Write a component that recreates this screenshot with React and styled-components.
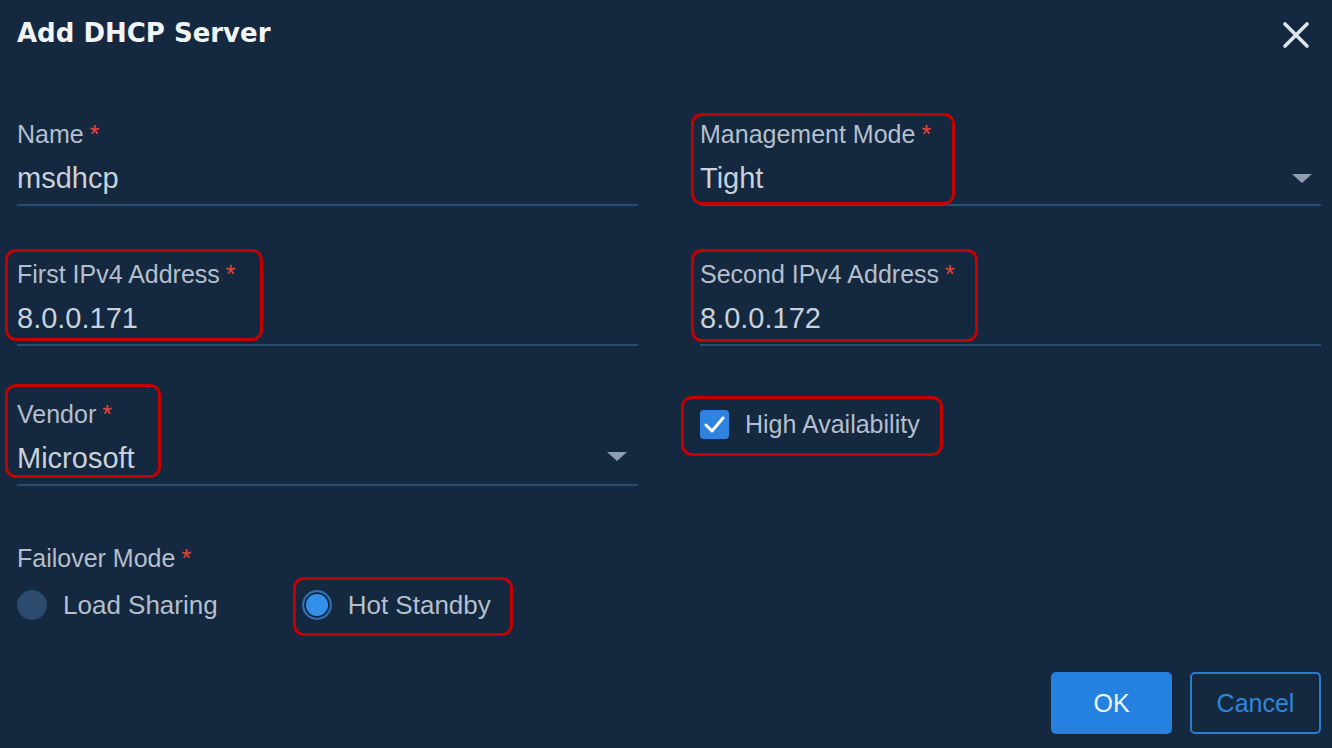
import React from 'react'
import styled, { createGlobalStyle } from 'styled-components'

const GlobalStyle = createGlobalStyle`
  html, body {
    margin: 0;
    padding: 0;
    background: #142840;
  }
  body {
    font-family: "Liberation Sans", Arial, sans-serif;
  }
`

const Dialog = styled.div`
  width: 1332px;
  height: 748px;
  box-sizing: border-box;
  padding: 16px 11px 0 17px;
  display: flex;
  flex-direction: column;
  background: #142840;
  overflow: hidden;
`

const Header = styled.div`
  display: flex;
  justify-content: space-between;
  align-items: flex-start;
  height: 32px;
`

const Title = styled.h1`
  margin: 2px 0 0;
  font-family: "DejaVu Sans", sans-serif;
  font-weight: bold;
  font-size: 26px;
  line-height: 30px;
  color: #f1f3f6;
`

const Close = styled.button`
  border: 0;
  padding: 0;
  margin: 5px 11px 0 0;
  background: transparent;
  width: 28px;
  height: 28px;
  display: flex;
  cursor: pointer;
`

const Form = styled.div`
  margin-top: 71px;
  display: grid;
  grid-template-columns: 1fr 1fr;
  column-gap: 62px;
  row-gap: 53px;
`

const Field = styled.div`
  display: flex;
  justify-content: space-between;
  align-items: flex-end;
  padding-bottom: 8px;
  border-bottom: 2px solid #2b4d70;
`

const Content = styled.div`
  position: relative;
  display: inline-flex;
  flex-direction: column;
`

const Highlight = styled.div`
  position: relative;
  display: inline-flex;
  flex-direction: ${p => (p.$row ? 'row' : 'column')};
  align-items: ${p => (p.$row ? 'center' : 'stretch')};
  gap: ${p => (p.$row ? '16px' : '0')};

  &::after {
    content: '';
    position: absolute;
    inset: ${p => p.$inset};
    border: 3px solid #c40000;
    border-radius: 11px;
    pointer-events: none;
  }
`

const Label = styled.div`
  font-size: 25px;
  line-height: 30px;
  color: #b5bfcc;
  white-space: nowrap;

  span {
    color: #e8453a;
    margin-left: 6px;
  }
`

const Value = styled.div`
  margin-top: 11px;
  font-size: 29px;
  line-height: 36px;
  color: #c9d1db;
  white-space: nowrap;
`

const Caret = styled.div`
  width: 0;
  height: 0;
  border-left: 10px solid transparent;
  border-right: 10px solid transparent;
  border-top: 9px solid #8e9db0;
  margin: 0 ${p => p.$right}px ${p => p.$bottom}px 0;
`

const CheckField = styled.div`
  align-self: start;
  margin-top: 10px;
`

const Checkbox = styled.div`
  width: 29px;
  height: 29px;
  border-radius: 4px;
  background: #2d84e0;
  display: flex;
  align-items: center;
  justify-content: center;
`

const OptionText = styled.span`
  font-size: ${p => p.$size || 25}px;
  line-height: 30px;
  color: #b5bfcc;
  white-space: nowrap;
`

const Failover = styled.div`
  margin-top: 57px;
`

const RadioGroup = styled.div`
  margin-top: 17px;
  display: flex;
  align-items: center;
  gap: 84px;
`

const RadioItem = styled.div`
  display: flex;
  align-items: center;
  gap: 16px;
`

const Radio = styled.div`
  width: 30px;
  height: 30px;
  border-radius: 50%;
  box-sizing: border-box;
  background: ${p => (p.$checked ? '#3390ea' : '#2b4a6d')};
  border: ${p => (p.$checked ? '2px solid #2e6eb3' : '0')};
  box-shadow: ${p => (p.$checked ? 'inset 0 0 0 2px #142840' : 'none')};
`

const Footer = styled.div`
  margin-top: 52px;
  display: flex;
  justify-content: flex-end;
  gap: 18px;
`

const Button = styled.button`
  height: 62px;
  width: ${p => p.$w}px;
  box-sizing: border-box;
  border-radius: 5px;
  font-family: "Liberation Sans", Arial, sans-serif;
  font-size: 25px;
  cursor: pointer;
  background: ${p => (p.$primary ? '#2481e0' : 'transparent')};
  border: ${p => (p.$primary ? '0' : '2px solid #2a7cd3')};
  color: ${p => (p.$primary ? '#eef4fb' : '#2f86de')};
`

const Req = () => <span>*</span>

const App = () => {
  return (
    <>
      <GlobalStyle />
      <Dialog>
        <Header>
          <Title>Add DHCP Server</Title>
          <Close>
            <svg width="28" height="28" viewBox="0 0 28 28">
              <path d="M3 3 L25 25 M25 3 L3 25" stroke="#dfe4ea" strokeWidth="3.6" strokeLinecap="round" />
            </svg>
          </Close>
        </Header>

        <Form>
          <Field>
            <Content>
              <Label>Name<Req /></Label>
              <Value>msdhcp</Value>
            </Content>
          </Field>
          <Field>
            <Highlight $inset="-6px -24px -9px -9px">
              <Label>Management Mode<Req /></Label>
              <Value>Tight</Value>
            </Highlight>
            <Caret $right={9} $bottom={13} />
          </Field>

          <Field>
            <Highlight $inset="-10px -27px -5px -12px">
              <Label>First IPv4 Address<Req /></Label>
              <Value>8.0.0.171</Value>
            </Highlight>
          </Field>
          <Field>
            <Highlight $inset="-10px -23px -6px -9px">
              <Label>Second IPv4 Address<Req /></Label>
              <Value>8.0.0.172</Value>
            </Highlight>
          </Field>

          <Field>
            <Highlight $inset="-15px -26px -2px -12px">
              <Label>Vendor<Req /></Label>
              <Value>Microsoft</Value>
            </Highlight>
            <Caret $right={11} $bottom={15} />
          </Field>
          <CheckField>
            <Highlight $row $inset="-13px -23px -17px -19px">
              <Checkbox>
                <svg width="25" height="25" viewBox="0 0 25 25">
                  <path d="M4 13 L10 19 L21 6" fill="none" stroke="#ffffff" strokeWidth="3" strokeLinecap="round" strokeLinejoin="round" />
                </svg>
              </Checkbox>
              <OptionText>High Availability</OptionText>
            </Highlight>
          </CheckField>
        </Form>

        <Failover>
          <Label>Failover Mode<Req /></Label>
          <RadioGroup>
            <RadioItem>
              <Radio />
              <OptionText $size={26}>Load Sharing</OptionText>
            </RadioItem>
            <Highlight $row $inset="-13px -22px -16px -9px">
              <Radio $checked />
              <OptionText $size={26}>Hot Standby</OptionText>
            </Highlight>
          </RadioGroup>
        </Failover>

        <Footer>
          <Button $primary $w={121}>OK</Button>
          <Button $w={131}>Cancel</Button>
        </Footer>
      </Dialog>
    </>
  )
}

export default App
